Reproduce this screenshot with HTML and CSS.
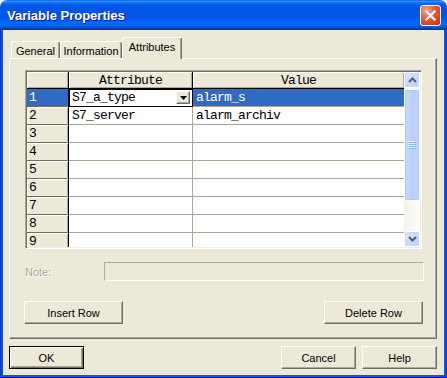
FILE: index.html
```html
<!DOCTYPE html>
<html lang="en">
<head>
    <meta charset="UTF-8">
    <title>Variable Properties</title>
    <link rel="stylesheet" href="styles.css">
</head>
<body>
    <div class="window">
        <div class="titlebar">
            <span class="title">Variable Properties</span>
            <div class="close-btn">
                <svg width="13" height="13" viewBox="0 0 13 13"><path d="M2.5 2.5 L10.5 10.5 M10.5 2.5 L2.5 10.5" stroke="#fff" stroke-width="2.2" stroke-linecap="square"/></svg>
            </div>
        </div>
        <div class="frame">
            <div class="client">
                <div class="tabs">
                    <div class="tab tab-general">General</div>
                    <div class="tab tab-info">Information</div>
                    <div class="tab tab-attr active">Attributes</div>
                </div>

                <div class="panel">
                    <div class="grid-box">
                        <div class="grid">
                            <div class="hcell"></div>
                            <div class="hcell">Attribute</div>
                            <div class="hcell last">Value</div>

                            <div class="rowhead selected">1</div>
                            <div class="cell editing">
                                <span>S7_a_type</span>
                                <span class="drop-btn">
                                    <svg width="7" height="4" viewBox="0 0 7 4"><path d="M0 0 H7 L3.5 4 Z" fill="#000"/></svg>
                                </span>
                            </div>
                            <div class="cell last selected">alarm_s</div>

                            <div class="rowhead">2</div>
                            <div class="cell">S7_server</div>
                            <div class="cell last">alarm_archiv</div>

                            <div class="rowhead">3</div>
                            <div class="cell"></div>
                            <div class="cell last"></div>

                            <div class="rowhead">4</div>
                            <div class="cell"></div>
                            <div class="cell last"></div>

                            <div class="rowhead">5</div>
                            <div class="cell"></div>
                            <div class="cell last"></div>

                            <div class="rowhead">6</div>
                            <div class="cell"></div>
                            <div class="cell last"></div>

                            <div class="rowhead">7</div>
                            <div class="cell"></div>
                            <div class="cell last"></div>

                            <div class="rowhead">8</div>
                            <div class="cell"></div>
                            <div class="cell last"></div>

                            <div class="rowhead">9</div>
                            <div class="cell"></div>
                            <div class="cell last"></div>
                        </div>

                        <div class="scrollbar">
                            <div class="sb-btn">
                                <svg width="9" height="6" viewBox="0 0 9 6"><path d="M1 5 L4.5 1.5 L8 5" fill="none" stroke="#4D6185" stroke-width="2"/></svg>
                            </div>
                            <div class="sb-thumb">
                                <svg width="8" height="8" viewBox="0 0 8 8">
                                    <path d="M0 0.5 H7 M0 2.5 H7 M0 4.5 H7 M0 6.5 H7" stroke="#EEF4FE" stroke-width="1"/>
                                    <path d="M1 1.5 H8 M1 3.5 H8 M1 5.5 H8 M1 7.5 H8" stroke="#8CB0F8" stroke-width="1"/>
                                </svg>
                            </div>
                            <div class="sb-track"></div>
                            <div class="sb-btn">
                                <svg width="9" height="6" viewBox="0 0 9 6"><path d="M1 1 L4.5 4.5 L8 1" fill="none" stroke="#4D6185" stroke-width="2"/></svg>
                            </div>
                        </div>
                    </div>

                    <div class="note-row">
                        <label class="note-label">Note:</label>
                        <div class="note-input"></div>
                    </div>

                    <div class="row-buttons">
                        <button class="btn btn-wide">Insert Row</button>
                        <button class="btn btn-wide">Delete Row</button>
                    </div>
                </div>

                <div class="dialog-buttons">
                    <button class="btn default">OK</button>
                    <button class="btn cancel">Cancel</button>
                    <button class="btn help">Help</button>
                </div>
            </div>
        </div>
    </div>
</body>
</html>
```

FILE: styles.css
```css
* {
    box-sizing: border-box;
}

body {
    margin: 0;
    background-color: #fff;
}

.window {
    width: 447px;
    height: 378px;
    display: flex;
    flex-direction: column;
    font-family: "Liberation Sans", Arial, sans-serif;
    font-size: 11px;
    color: #000;
}

/* title bar */
.titlebar {
    height: 30px;
    flex: none;
    display: flex;
    align-items: center;
    padding: 0 6px 0 7px;
    border-radius: 7px 7px 0 0;
    background: linear-gradient(to bottom,
        #0058EE 0%, #3A93FF 4%, #288EFF 6%, #127DFF 8%, #036FFC 10%,
        #0262EE 14%, #0057E5 20%, #0054E3 24%, #0055EB 56%, #005BF5 66%,
        #026AFE 76%, #0062EF 86%, #0052D6 92%, #0040AB 96%, #003092 100%);
}

.title {
    flex: 1;
    color: #fff;
    font-weight: bold;
    font-size: 13px;
    text-shadow: 1px 1px #0F1C8C;
    padding-top: 1px;
}

.close-btn {
    width: 21px;
    height: 21px;
    margin-top: 1px;
    border: 1px solid #fff;
    border-radius: 3px;
    background: radial-gradient(circle at 30% 25%, #F4A98F 0%, #E36A45 35%, #D8461D 70%, #B93410 100%);
    display: flex;
    align-items: center;
    justify-content: center;
}

/* window frame */
.frame {
    flex: 1;
    display: flex;
    padding: 0 3px 3px 3px;
    background-color: #0A55E0;
    box-shadow: inset 1px 0 #0831D9, inset -1px 0 #0831D9, inset 0 -1px #00138C;
}

.client {
    flex: 1;
    background-color: #ECE9D8;
    display: flex;
    flex-direction: column;
}

/* tabs */
.tabs {
    margin-top: 7px;
    height: 21px;
    display: flex;
    align-items: flex-end;
    padding-left: 8px;
}

.tab {
    height: 17px;
    border-top: 1px solid #fff;
    border-left: 1px solid #fff;
    border-right: 1px solid #716F64;
    border-radius: 3px 3px 0 0;
    box-shadow: inset -1px 0 #ACA899;
    background-color: #ECE9D8;
    display: flex;
    align-items: center;
    justify-content: center;
    padding-top: 1px;
}

.tab-general {
    width: 49px;
}

.tab-info {
    width: 62px;
}

.tab-attr {
    width: 60px;
}

.tab.active {
    height: 22px;
    margin-bottom: -1px;
    position: relative;
    z-index: 1;
    padding-top: 0;
    padding-bottom: 3px;
}

/* tab panel */
.panel {
    margin-left: 6px;
    width: 428px;
    height: 281px;
    border-top: 1px solid #fff;
    border-left: 1px solid #fff;
    border-right: 1px solid #716F64;
    border-bottom: 1px solid #716F64;
    box-shadow: inset -1px -1px #ACA899;
    padding: 11px 0 0 15px;
}

/* attribute grid */
.grid-box {
    width: 397px;
    height: 179px;
    display: flex;
    border: 1px solid;
    border-color: #ACA899 #fff #fff #ACA899;
    padding: 1px;
    box-shadow: inset 1px 1px #716F64, inset -1px -1px #F1EFE2;
}

.grid {
    width: 377px;
    height: 175px;
    overflow: hidden;
    display: grid;
    grid-template-columns: 42px 124px 211px;
    grid-template-rows: 17px;
    grid-auto-rows: 18px;
    background-color: #fff;
    font-family: "Liberation Mono", "Courier New", monospace;
    font-size: 13px;
    letter-spacing: -0.8px;
    line-height: 17px;
}

.hcell {
    background-color: #ECE9D8;
    border-right: 1px solid #000;
    border-bottom: 1px solid #000;
    box-shadow: inset 1px 1px #fff, inset -1px -1px #ACA899;
    text-align: center;
}

.hcell.last {
    border-right: none;
}

.rowhead {
    background-color: #ECE9D8;
    border-right: 1px solid #000;
    border-bottom: 1px solid #716F64;
    box-shadow: inset 1px 1px #fff, inset -1px 0 #ACA899;
    padding-left: 2px;
}

.cell {
    border-right: 1px solid #ACA899;
    border-bottom: 1px solid #ACA899;
    padding-left: 3px;
    white-space: nowrap;
}

.cell.last {
    border-right: none;
}

.selected {
    background-color: #316AC5;
    color: #fff;
    box-shadow: none;
}

.cell.editing {
    display: flex;
    align-items: center;
    justify-content: space-between;
    border-color: #000;
    box-shadow: inset 1px 1px #000;
    padding-right: 2px;
}

.drop-btn {
    width: 14px;
    height: 13px;
    background-color: #ECE9D8;
    border-top: 1px solid #fff;
    border-left: 1px solid #fff;
    border-right: 1px solid #716F64;
    border-bottom: 1px solid #716F64;
    box-shadow: inset -1px -1px #ACA899;
    display: flex;
    align-items: center;
    justify-content: center;
}

/* scrollbar */
.scrollbar {
    width: 16px;
    height: 175px;
    display: flex;
    flex-direction: column;
    background: linear-gradient(to right, #F3F1EC, #FEFEFB);
}

.sb-btn {
    height: 16px;
    border: 1px solid #fff;
    border-radius: 2px;
    background: linear-gradient(135deg, #DCE6FE, #B9CDFA);
    box-shadow: inset 0 0 0 1px #C8D8FB;
    display: flex;
    align-items: center;
    justify-content: center;
}

.sb-thumb {
    margin-top: 1px;
    height: 112px;
    border: 1px solid #fff;
    border-radius: 2px;
    background: linear-gradient(to right, #C9D9FD, #B9CEFB 60%, #C4D5FC);
    box-shadow: inset 0 0 0 1px #B4C8F6;
    display: flex;
    align-items: center;
    justify-content: center;
}

.sb-track {
    flex: 1;
}

/* note */
.note-row {
    margin-top: 13px;
    display: flex;
    align-items: center;
}

.note-label {
    width: 79px;
    color: #ACA899;
    text-shadow: 1px 1px #fff;
}

.note-input {
    width: 320px;
    height: 19px;
    border: 1px solid;
    border-color: #ACA899 #fff #fff #ACA899;
}

/* buttons */
.btn {
    height: 23px;
    padding: 0;
    font-family: "Liberation Sans", Arial, sans-serif;
    font-size: 11px;
    color: #000;
    background-color: #ECE9D8;
    border-top: 1px solid #fff;
    border-left: 1px solid #fff;
    border-right: 1px solid #716F64;
    border-bottom: 1px solid #716F64;
    box-shadow: inset -1px -1px #ACA899;
}

.row-buttons {
    margin-top: 20px;
    margin-left: -1px;
    width: 399px;
    display: flex;
    justify-content: space-between;
}

.btn-wide {
    width: 99px;
}

.dialog-buttons {
    margin-top: 7px;
    padding: 0 7px 0 6px;
    display: flex;
}

.dialog-buttons .btn {
    width: 75px;
}

.btn.default {
    border: 1px solid #000;
    box-shadow: inset 1px 1px #fff, inset -1px -1px #716F64, inset -2px -2px #ACA899;
    margin-right: auto;
}

.btn.help {
    margin-left: 6px;
}
```
